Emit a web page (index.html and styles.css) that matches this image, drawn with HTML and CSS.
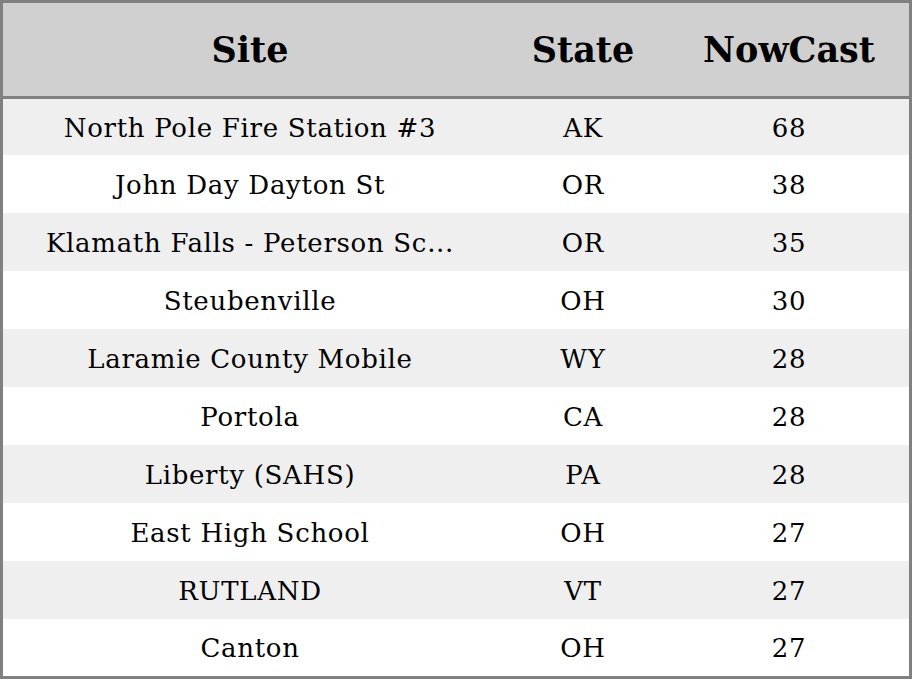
FILE: index.html
```html
<!DOCTYPE html>
<html>
<head>
<meta charset="utf-8">
<link rel="stylesheet" href="styles.css">
</head>
<body>
<div class="table">
  <div class="head">
    <div class="cell">Site</div>
    <div class="cell">State</div>
    <div class="cell">NowCast</div>
  </div>
  <div class="body">
    <div class="row"><div class="cell">North Pole Fire Station #3</div><div class="cell">AK</div><div class="cell">68</div></div>
    <div class="row"><div class="cell">John Day Dayton St</div><div class="cell">OR</div><div class="cell">38</div></div>
    <div class="row"><div class="cell">Klamath Falls - Peterson Sc...</div><div class="cell">OR</div><div class="cell">35</div></div>
    <div class="row"><div class="cell">Steubenville</div><div class="cell">OH</div><div class="cell">30</div></div>
    <div class="row"><div class="cell">Laramie County Mobile</div><div class="cell">WY</div><div class="cell">28</div></div>
    <div class="row"><div class="cell">Portola</div><div class="cell">CA</div><div class="cell">28</div></div>
    <div class="row"><div class="cell">Liberty (SAHS)</div><div class="cell">PA</div><div class="cell">28</div></div>
    <div class="row"><div class="cell">East High School</div><div class="cell">OH</div><div class="cell">27</div></div>
    <div class="row"><div class="cell">RUTLAND</div><div class="cell">VT</div><div class="cell">27</div></div>
    <div class="row"><div class="cell">Canton</div><div class="cell">OH</div><div class="cell">27</div></div>
  </div>
</div>
</body>
</html>
```
FILE: styles.css
```css
html, body {
  margin: 0;
  padding: 0;
  background: #ffffff;
}
.table {
  width: 912px;
  height: 679px;
  box-sizing: border-box;
  border: 3px solid #808080;
  font-family: "DejaVu Serif", serif;
  color: #000;
  display: flex;
  flex-direction: column;
}
.head, .row {
  display: grid;
  grid-template-columns: 494px 172px 240px;
}
.head {
  height: 93px;
  background: #d0d0d0;
  border-bottom: 3px solid #808080;
  font-weight: bold;
  font-size: 35px;
}
.row {
  height: 58px;
  font-size: 26px;
  letter-spacing: 0.7px;
  padding-top: 1px;
  box-sizing: border-box;
}
.row:first-child { height: 56px; }
.row:last-child { height: 57px; }
.row:nth-child(odd) { background: #efefef; }
.row:nth-child(even) { background: #ffffff; }
.cell {
  display: flex;
  align-items: center;
  justify-content: center;
  white-space: nowrap;
}
```
